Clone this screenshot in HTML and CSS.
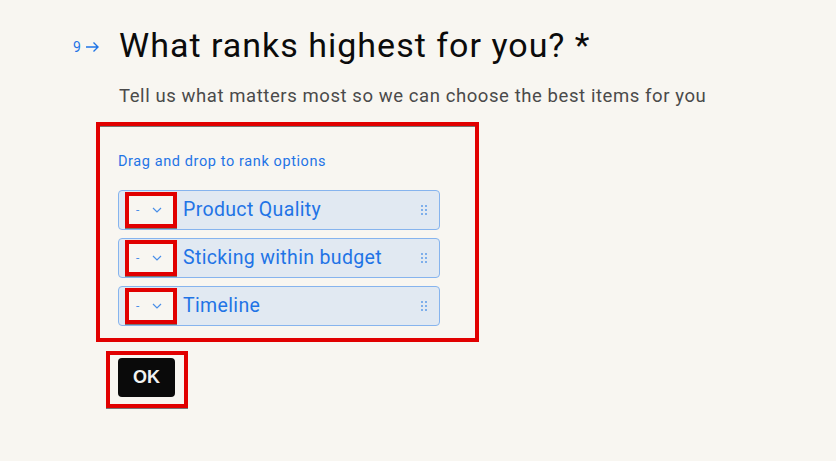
FILE: index.html
```html
<!DOCTYPE html>
<html>
<head>
<meta charset="utf-8">
<link rel="stylesheet" href="styles.css">
</head>
<body>
<main class="question">
  <header class="q-head">
    <span class="q-num">9<svg class="q-arrow" width="15" height="12" viewBox="0 0 15 12"><path d="M1 6h12M8.5 1.5 13 6l-4.5 4.5" fill="none" stroke="#1f74e6" stroke-width="1.4"/></svg></span>
    <h1 class="q-title">What ranks highest for you? *</h1>
  </header>
  <p class="q-sub">Tell us what matters most so we can choose the best items for you</p>
  <section class="rank-box">
    <p class="rank-hint">Drag and drop to rank options</p>
    <ul class="rank-list">
      <li class="rank-item">
        <span class="rank-select-wrap"><span class="rank-select"><span class="dash">-</span><svg width="10" height="6" viewBox="0 0 10 6"><path d="M1 1l4 4 4-4" fill="none" stroke="#4a8fe8" stroke-width="1.2"/></svg></span></span>
        <span class="rank-label">Product Quality</span>
        <span class="handle"><i></i><i></i><i></i><i></i><i></i><i></i></span>
      </li>
      <li class="rank-item">
        <span class="rank-select-wrap"><span class="rank-select"><span class="dash">-</span><svg width="10" height="6" viewBox="0 0 10 6"><path d="M1 1l4 4 4-4" fill="none" stroke="#4a8fe8" stroke-width="1.2"/></svg></span></span>
        <span class="rank-label">Sticking within budget</span>
        <span class="handle"><i></i><i></i><i></i><i></i><i></i><i></i></span>
      </li>
      <li class="rank-item">
        <span class="rank-select-wrap"><span class="rank-select"><span class="dash">-</span><svg width="10" height="6" viewBox="0 0 10 6"><path d="M1 1l4 4 4-4" fill="none" stroke="#4a8fe8" stroke-width="1.2"/></svg></span></span>
        <span class="rank-label">Timeline</span>
        <span class="handle"><i></i><i></i><i></i><i></i><i></i><i></i></span>
      </li>
    </ul>
  </section>
  <div class="ok-wrap"><button class="ok-btn">OK</button></div>
</main>
</body>
</html>
```

FILE: styles.css
```css
html, body {
  margin: 0;
  padding: 0;
  background: #f8f6f1;
}
body {
  font-family: "Roboto", "Liberation Sans", sans-serif;
  width: 836px;
  height: 461px;
  overflow: hidden;
}
.question {
  padding: 20px 0 0 73px;
}
.q-head {
  display: flex;
  align-items: center;
}
.q-num {
  width: 46px;
  display: flex;
  align-items: center;
  gap: 4px;
  color: #1f74e6;
  font-size: 14px;
  margin-top: 4px;
}
.q-title {
  margin: 0;
  font-size: 34px;
  line-height: 50px;
  font-weight: 400;
  letter-spacing: 1px;
  color: #0b0b0b;
}
.q-sub {
  margin: 14px 0 0 46px;
  font-size: 18.5px;
  line-height: 24px;
  letter-spacing: 0.58px;
  color: #4a4a4a;
}
.rank-box {
  margin: 14px 0 0 23px;
  width: 375px;
  height: 212px;
  box-sizing: content-box;
  border: 4px solid #e10000;
  box-shadow: inset 0 1px 0 #777;
  padding: 0;
}
.rank-hint {
  margin: 27px 0 0 18px;
  font-size: 14.5px;
  line-height: 18px;
  letter-spacing: 0.6px;
  color: #1f74e6;
}
.rank-list {
  list-style: none;
  margin: 19px 0 0 18px;
  padding: 0;
  width: 322px;
  display: flex;
  flex-direction: column;
  gap: 8px;
}
.rank-item {
  height: 40px;
  box-sizing: border-box;
  border: 1px solid #86b4ee;
  border-radius: 4px;
  background: #e1e9f2;
  display: flex;
  align-items: center;
  padding: 0 12px 0 6px;
}
.rank-select-wrap {
  border: 4px solid #e10000;
  box-shadow: 0 1px 0 #777;
  width: 52px;
  height: 36px;
  box-sizing: border-box;
  display: flex;
}
.rank-select {
  flex: 1;
  background: #f8f6f1;
  display: flex;
  align-items: center;
  gap: 13px;
  padding-left: 7px;
  color: #4a8fe8;
  font-size: 12px;
}
.rank-label {
  flex: 1;
  margin-left: 6px;
  margin-top: -2px;
  font-size: 19.5px;
  letter-spacing: 0.35px;
  color: #1f74e6;
}
.handle {
  display: grid;
  grid-template-columns: 2.5px 2.5px;
  gap: 1.5px 1.5px;
}
.handle i {
  width: 2.5px;
  height: 2.5px;
  background: #5d9be9;
  border-radius: 1px;
}
.ok-wrap {
  margin: 9px 0 0 33px;
  border: 4px solid #e10000;
  box-shadow: 0 1px 0 #777;
  padding: 3px 0 0 8px;
  box-sizing: content-box;
  width: 66px;
  height: 46px;
}
.ok-btn {
  display: block;
  width: 57px;
  height: 39px;
  background: #0a0a0a;
  color: #f2f2f2;
  border: none;
  border-radius: 4px;
  font-family: "Liberation Sans", Arial, sans-serif;
  font-weight: 700;
  font-size: 18px;
  padding: 0;
}
```
